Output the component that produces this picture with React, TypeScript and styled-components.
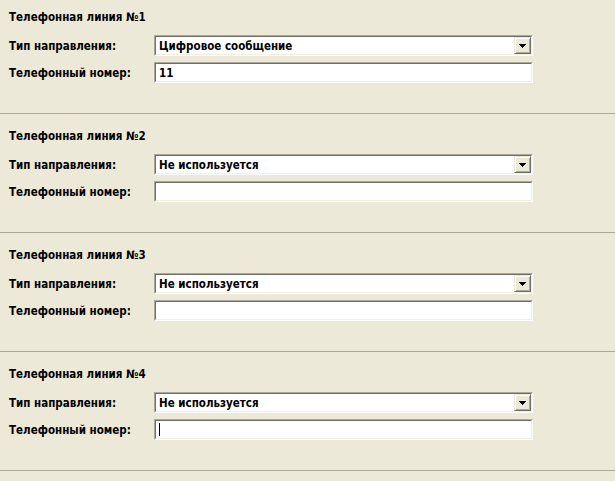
import React from "react";
import styled, { createGlobalStyle } from "styled-components";

const Global = createGlobalStyle`
  html, body { margin: 0; padding: 0; background: #ECE9D8; }
  body { font-family: "DejaVu Sans Condensed", "DejaVu Sans", Tahoma, sans-serif; }
`;

const Page = styled.div`
  width: 615px;
  height: 481px;
  overflow: hidden;
  background: #ECE9D8;
  color: #000;
  font-family: "DejaVu Sans Condensed", "DejaVu Sans", Tahoma, sans-serif;
  font-size: 11.5px;
  font-weight: bold;
`;

const Section = styled.section<{ $first?: boolean }>`
  padding: ${(p) => (p.$first ? "10px" : "15px")} 0 30px 9px;
  border-bottom: 1px solid #ACA899;
  display: flex;
  flex-direction: column;
`;

const Title = styled.div`
  height: 14px;
  line-height: 14px;
  margin-bottom: 11px;
`;

const Row = styled.div`
  display: grid;
  grid-template-columns: 145px 379px;
  align-items: center;
  height: 21px;
  & + & { margin-top: 6px; }
`;

const Label = styled.div`
  line-height: 14px;
`;

const Sunken = styled.div`
  box-sizing: border-box;
  height: 21px;
  background: #fff;
  border-style: solid;
  border-width: 1px;
  border-color: #ACA899 #fff #fff #ACA899;
  display: flex;
  align-items: stretch;
`;

const Inner = styled.div`
  flex: 1;
  display: flex;
  align-items: center;
  border-style: solid;
  border-width: 1px;
  border-color: #716F64 #F1EFE2 #F1EFE2 #716F64;
  padding-left: 3px;
  min-width: 0;
`;

const Value = styled.span`
  flex: 1;
  line-height: 14px;
  white-space: nowrap;
`;

const Caret = styled.span`
  width: 1px;
  height: 13px;
  background: #000;
`;

const DropButton = styled.div`
  box-sizing: border-box;
  width: 17px;
  height: 17px;
  background: #ECE9D8;
  border-style: solid;
  border-width: 1px;
  border-color: #ECE9D8 #716F64 #716F64 #ECE9D8;
  box-shadow: inset 1px 1px 0 #fff, inset -1px -1px 0 #ACA899;
  display: flex;
  align-items: center;
  justify-content: center;
`;

function Arrow() {
  return (
    <svg width="7" height="4" viewBox="0 0 7 4" style={{ display: "block", marginTop: 1 }}>
      <path d="M0 0H7L3.5 4Z" fill="#000" shapeRendering="crispEdges" />
    </svg>
  );
}

type Line = { n: number; type: string; phone: string; caret?: boolean };

const lines: Line[] = [
  { n: 1, type: "Цифровое сообщение", phone: "11" },
  { n: 2, type: "Не используется", phone: "" },
  { n: 3, type: "Не используется", phone: "" },
  { n: 4, type: "Не используется", phone: "", caret: true },
];

export default function App() {
  return (
    <Page>
      <Global />
      {lines.map((l, i) => (
        <Section key={l.n} $first={i === 0}>
          <Title>Телефонная линия №{l.n}</Title>
          <Row>
            <Label>Тип направления:</Label>
            <Sunken>
              <Inner>
                <Value>{l.type}</Value>
                <DropButton>
                  <Arrow />
                </DropButton>
              </Inner>
            </Sunken>
          </Row>
          <Row>
            <Label>Телефонный номер:</Label>
            <Sunken>
              <Inner>
                {l.caret ? <Caret /> : <Value>{l.phone}</Value>}
              </Inner>
            </Sunken>
          </Row>
        </Section>
      ))}
    </Page>
  );
}
